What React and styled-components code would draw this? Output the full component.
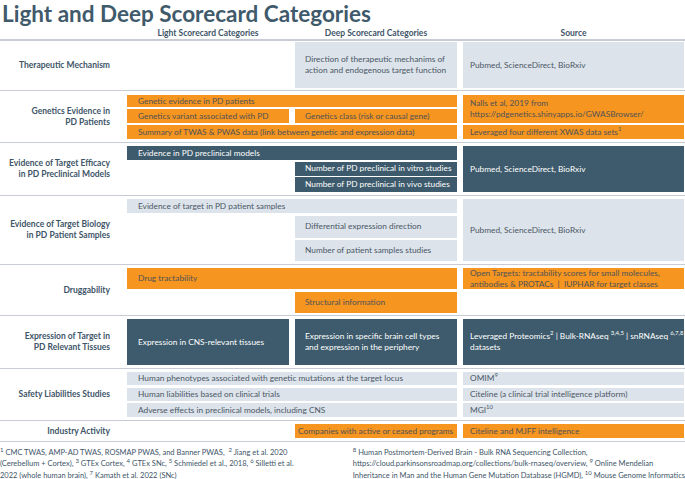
import React from 'react';
import styled, { createGlobalStyle } from 'styled-components';

const GlobalStyle = createGlobalStyle`
  body {
    margin: 0;
    background: #fff;
    font-family: Lato, 'Open Sans', sans-serif;
  }
`;

const COLS = '121px 162px 162px 221px';

const Page = styled.div`
  width: 685px;
  height: 479px;
  overflow: hidden;
  color: #3e5568;
`;

const Title = styled.h1`
  margin: 0;
  padding-left: 2px;
  font-size: 22.5px;
  line-height: 27px;
  height: 26px;
  font-weight: 700;
  color: #3f5a6b;
  white-space: nowrap;
`;

const HeaderRow = styled.div`
  display: grid;
  grid-template-columns: ${COLS};
  column-gap: 6px;
  height: 13px;
  align-items: center;
  border-bottom: 2px solid #c7ccd4;
`;

const HeaderCell = styled.div`
  text-align: center;
  font-size: 8.5px;
  font-weight: 700;
  color: #3e5568;
`;

const Section = styled.div`
  display: grid;
  grid-template-columns: ${COLS};
  grid-template-rows: ${(p) => p.$rows};
  column-gap: 6px;
  row-gap: ${(p) => p.$gap || 2}px;
  padding: ${(p) => p.$pt || 3}px 0 ${(p) => p.$pb || 3}px;
  border-bottom: 1px solid #c7ccd4;
`;

const Label = styled.div`
  grid-column: 1;
  grid-row: 1 / -1;
  align-self: center;
  text-align: right;
  padding-right: 11px;
  font-size: 8.5px;
  line-height: 11px;
  font-weight: 700;
  color: #3e5568;
`;

const tones = {
  orange: { bg: '#f6951f', fg: '#4f5358' },
  dark: { bg: '#3d5b6c', fg: '#ffffff' },
  light: { bg: '#dde3ea', fg: '#4a5867' },
};

const colPlace = {
  light: '2',
  deep: '3',
  both: '2 / 4',
  source: '4',
};

const colPad = {
  light: 11,
  deep: 10,
  both: 11,
  source: 7,
};

const Sup = styled.sup`
  font-size: 6px;
  line-height: 0;
  vertical-align: super;
`;

const Cell = styled.div`
  grid-column: ${(p) => colPlace[p.$col]};
  grid-row: ${(p) => p.$row || 'auto'};
  display: flex;
  align-items: center;
  padding: 0 ${(p) => p.$pad ?? colPad[p.$col]}px;
  background: ${(p) => tones[p.$tone].bg};
  color: ${(p) => tones[p.$tone].fg};
  font-size: 8.3px;
  line-height: 11px;
  white-space: nowrap;
  overflow: hidden;
`;

const Footnotes = styled.div`
  display: flex;
  justify-content: space-between;
  padding-top: 5px;
`;

const Note = styled.p`
  margin: 0;
  font-size: 7.5px;
  line-height: 11.3px;
  color: #3e5568;
  white-space: nowrap;
`;

function App() {
  return (
    <Page>
      <GlobalStyle />
      <Title>Light and Deep Scorecard Categories</Title>

      <HeaderRow>
        <div />
        <HeaderCell>Light Scorecard Categories</HeaderCell>
        <HeaderCell>Deep Scorecard Categories</HeaderCell>
        <HeaderCell>Source</HeaderCell>
      </HeaderRow>

      <Section $rows="46px" $pt={1} $pb={2}>
        <Label>Therapeutic Mechanism</Label>
        <Cell $col="deep" $tone="light" $row="1">
          Direction of therapeutic mechanims of<br />action and endogenous target function
        </Cell>
        <Cell $col="source" $tone="light" $row="1">Pubmed, ScienceDirect, BioRxiv</Cell>
      </Section>

      <Section $rows="12px 14px 14px" $pt={4}>
        <Label>Genetics Evidence in<br />PD Patients</Label>
        <Cell $col="both" $tone="orange" $row="1">Genetic evidence in PD patients</Cell>
        <Cell $col="light" $tone="orange" $row="2">Genetics variant associated with PD</Cell>
        <Cell $col="deep" $tone="orange" $row="2">Genetics class (risk or causal gene)</Cell>
        <Cell $col="both" $tone="orange" $row="3">
          Summary of TWAS &amp; PWAS data (link between genetic and expression data)
        </Cell>
        <Cell $col="source" $tone="orange" $row="1 / 3">
          Nalls et al, 2019 from<br />https://pdgenetics.shinyapps.io/GWASBrowser/
        </Cell>
        <Cell $col="source" $tone="orange" $row="3">
          <span>Leveraged four different XWAS data sets<Sup>1</Sup></span>
        </Cell>
      </Section>

      <Section $rows="14px 14px 15px" $gap={1.5}>
        <Label>Evidence of Target Efficacy<br />in PD Preclinical Models</Label>
        <Cell $col="both" $tone="dark" $row="1">Evidence in PD preclinical models</Cell>
        <Cell $col="deep" $tone="dark" $row="2">Number of PD preclinical in vitro studies</Cell>
        <Cell $col="deep" $tone="dark" $row="3">Number of PD preclinical in vivo studies</Cell>
        <Cell $col="source" $tone="dark" $row="1 / 4">Pubmed, ScienceDirect, BioRxiv</Cell>
      </Section>

      <Section $rows="14px 22px 21px" $gap={2.5}>
        <Label>Evidence of Target Biology<br />in PD Patient Samples</Label>
        <Cell $col="both" $tone="light" $row="1">Evidence of target in PD patient samples</Cell>
        <Cell $col="deep" $tone="light" $row="2">Differential expression direction</Cell>
        <Cell $col="deep" $tone="light" $row="3">Number of patient samples studies</Cell>
        <Cell $col="source" $tone="light" $row="1 / 4">Pubmed, ScienceDirect, BioRxiv</Cell>
      </Section>

      <Section $rows="21px 21px" $gap={3} $pb={2}>
        <Label>Druggability</Label>
        <Cell $col="both" $tone="orange" $row="1">Drug tractability</Cell>
        <Cell $col="deep" $tone="orange" $row="2">Structural information</Cell>
        <Cell $col="source" $tone="orange" $row="1">
          <span>
            Open Targets: tractability scores for small molecules,<br />
            antibodies &amp; PROTACs &nbsp;|&nbsp; IUPHAR for target classes
          </span>
        </Cell>
      </Section>

      <Section $rows="46px">
        <Label>Expression of Target in<br />PD Relevant Tissues</Label>
        <Cell $col="light" $tone="dark" $row="1">Expression in CNS-relevant tissues</Cell>
        <Cell $col="deep" $tone="dark" $row="1">
          Expression in specific brain cell types<br />and expression in the periphery
        </Cell>
        <Cell $col="source" $tone="dark" $row="1">
          <span>
            Leveraged Proteomics<Sup>2</Sup> | Bulk-RNAseq <Sup>3,4,5</Sup> | snRNAseq <Sup>6,7,8</Sup>
            <br />datasets
          </span>
        </Cell>
      </Section>

      <Section $rows="13px 13px 14px" $gap={2.5}>
        <Label>Safety Liabilities Studies</Label>
        <Cell $col="both" $tone="light" $row="1">
          Human phenotypes associated with genetic mutations at the target locus
        </Cell>
        <Cell $col="both" $tone="light" $row="2">Human liabilities based on clinical trials</Cell>
        <Cell $col="both" $tone="light" $row="3">Adverse effects in preclinical models, including CNS</Cell>
        <Cell $col="source" $tone="light" $row="1"><span>OMIM<Sup>9</Sup></span></Cell>
        <Cell $col="source" $tone="light" $row="2">Citeline (a clinical trial intelligence platform)</Cell>
        <Cell $col="source" $tone="light" $row="3"><span>MGI<Sup>10</Sup></span></Cell>
      </Section>

      <Section $rows="14px">
        <Label>Industry Activity</Label>
        <Cell $col="deep" $tone="orange" $row="1" $pad={3}>Companies with active or ceased programs</Cell>
        <Cell $col="source" $tone="orange" $row="1">Citeline and MJFF intelligence</Cell>
      </Section>

      <Footnotes>
        <Note>
          <Sup>1</Sup> CMC TWAS, AMP-AD TWAS, ROSMAP PWAS, and Banner PWAS, &nbsp;<Sup>2</Sup> Jiang et al. 2020
          <br />
          (Cerebellum + Cortex), <Sup>3</Sup> GTEx Cortex, <Sup>4</Sup> GTEx SNc, <Sup>5</Sup> Schmiedel et al., 2018,{' '}
          <Sup>6</Sup> Silletti et al.
          <br />
          2022 (whole human brain), <Sup>7</Sup> Kamath et al. 2022 (SNc)
        </Note>
        <Note>
          <Sup>8</Sup> Human Postmortem-Derived Brain - Bulk RNA Sequencing Collection,
          <br />
          https://cloud.parkinsonsroadmap.org/collections/bulk-rnaseq/overview, <Sup>9</Sup> Online Mendelian
          <br />
          Inheritance in Man and the Human Gene Mutation Database (HGMD), <Sup>10</Sup> Mouse Genome Informatics
        </Note>
      </Footnotes>
    </Page>
  );
}

export default App;
